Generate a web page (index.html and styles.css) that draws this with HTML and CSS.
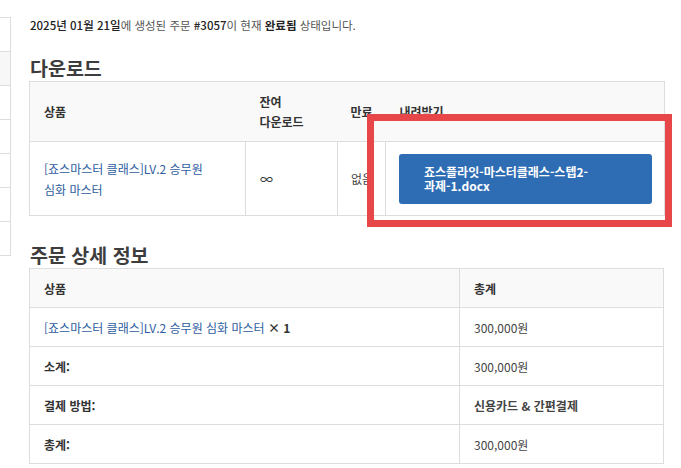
FILE: index.html
```html
<!DOCTYPE html>
<html lang="ko">
<head>
<meta charset="utf-8">
<link rel="stylesheet" href="styles.css">
</head>
<body>
<div class="page">
  <aside class="sidenav">
    <div class="nav-item"></div>
    <div class="nav-item active"></div>
    <div class="nav-item"></div>
    <div class="nav-item"></div>
    <div class="nav-item"></div>
    <div class="nav-item"></div>
    <div class="nav-item"></div>
  </aside>
  <main class="content">
    <p class="order-note"><mark>2025년 01월 21일</mark>에 생성된 주문 <mark>#3057</mark>이 현재 <mark class="status">완료됨</mark> 상태입니다.</p>

    <h2 class="section-title">다운로드</h2>
    <div class="downloads-wrap">
      <table class="tbl downloads">
        <thead>
          <tr>
            <th class="c-product">상품</th>
            <th class="c-remain">잔여 다운로드</th>
            <th class="c-expire">만료</th>
            <th class="c-file">내려받기</th>
          </tr>
        </thead>
        <tbody>
          <tr>
            <td class="product"><a class="link">[죠스마스터 클래스]LV.2 승무원 심화 마스터</a></td>
            <td class="inf">∞</td>
            <td class="expire">없음</td>
            <td class="file"><a class="btn">죠스플라잇-마스터클래스-스텝2-<br>과제-1.docx</a></td>
          </tr>
        </tbody>
      </table>
      <div class="highlight"></div>
    </div>

    <h2 class="section-title second">주문 상세 정보</h2>
    <table class="tbl details">
      <thead>
        <tr>
          <th class="d-left">상품</th>
          <th class="d-right">총계</th>
        </tr>
      </thead>
      <tbody>
        <tr>
          <td><a class="link">[죠스마스터 클래스]LV.2 승무원 심화 마스터</a> <strong class="qty">× 1</strong></td>
          <td>300,000원</td>
        </tr>
        <tr>
          <th>소계:</th>
          <td>300,000원</td>
        </tr>
        <tr>
          <th>결제 방법:</th>
          <td class="strong">신용카드 &amp; 간편결제</td>
        </tr>
        <tr>
          <th>총계:</th>
          <td>300,000원</td>
        </tr>
      </tbody>
    </table>
  </main>
</div>
</body>
</html>
```
FILE: styles.css
```css
* { box-sizing: border-box; }
html, body { margin: 0; padding: 0; background: #fff; }
body {
  font-family: "Noto Sans CJK KR", "Noto Sans", sans-serif;
  font-size: 12px;
  color: #555;
  width: 681px;
  height: 468px;
  overflow: hidden;
  word-break: keep-all;
}
.page {
  display: flex;
  align-items: flex-start;
}
.sidenav {
  width: 11px;
  margin-top: 17px;
  border-top: 1px solid #ddd;
  border-right: 1px solid #ddd;
  flex: none;
}
.nav-item {
  height: 34px;
  border-bottom: 1px solid #ddd;
}
.nav-item.active { background: #f7f7f7; }
.content {
  margin-left: 18px;
  width: 635px;
  flex: none;
}
.order-note {
  margin: 16px 0 0 1px;
  font-size: 11.5px;
  line-height: 18px;
  color: #555;
}
.order-note mark {
  background: none;
  color: #222;
  font-weight: 500;
}
.order-note mark.status { font-weight: 700; }
.section-title {
  margin: 22px 0 0 1px;
  font-size: 19.5px;
  line-height: 24px;
  font-weight: 700;
  color: #3d3d3d;
  height: 25px;
}
.section-title.second { margin-top: 27px; height: 25px; }
.tbl {
  width: 635px;
  border-collapse: collapse;
  border: 1px solid #ddd;
  table-layout: fixed;
}
.tbl th, .tbl td {
  text-align: left;
  vertical-align: middle;
  padding: 0 12px 0 14px;
  border: 1px solid #ddd;
  line-height: 21px;
}
.tbl th {
  font-weight: 700;
  color: #333;
}
.tbl thead th { background: #f9f9f9; }
.tbl td { color: #444; }
.downloads-wrap { position: relative; }
.downloads thead th { border-left: none; border-right: none; height: 60px; line-height: 20px; }
.c-product { width: 216px; }
.c-remain { width: 92px; }
.c-expire { width: 48px; }
.c-file { width: 279px; }
.downloads td.product { padding-right: 24px; }
.downloads th.c-expire, .downloads td.expire { padding: 0 4px 0 13px; }
.downloads tbody td { height: 74px; }
.downloads .inf { font-size: 13px; color: #333; }
.link {
  color: #2c5d9e;
  text-decoration: none;
}
.downloads td.file { padding: 0 12px 0 13px; }
.btn {
  display: block;
  background: #2e6cb3;
  color: #fff;
  font-weight: 700;
  font-size: 12px;
  line-height: 14px;
  padding: 11px 25px;
  border-radius: 3px;
  text-decoration: none;
}
.highlight {
  position: absolute;
  left: 338px;
  top: 33px;
  width: 305px;
  height: 113px;
  border: 7px solid #e8474a;
  pointer-events: none;
}
.details td, .details th { height: 39px; }
.details .d-left { width: 430px; }
.details tbody th { background: #fff; }
.qty { color: #333; font-weight: 700; }
.details td.strong { font-weight: 700; color: #444; }
```
